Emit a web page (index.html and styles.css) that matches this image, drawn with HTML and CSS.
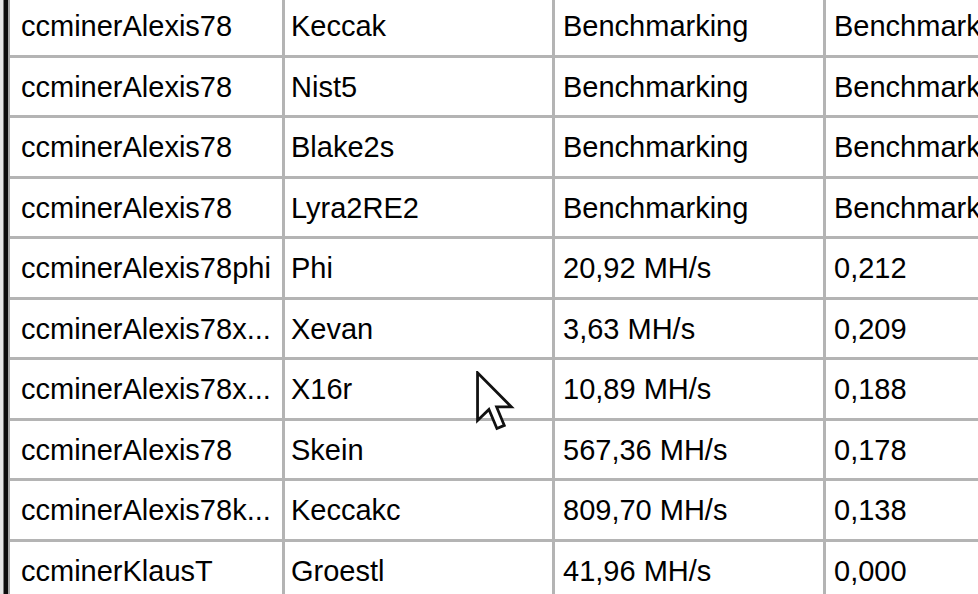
FILE: index.html
```html
<!DOCTYPE html>
<html>
<head>
<meta charset="utf-8">
<link rel="stylesheet" href="styles.css">
</head>
<body>
<div class="frame">
  <div class="frame-dark">
    <div class="frame-inner">
      <div class="list">
        <div class="row"><div class="cell c1">ccminerAlexis78</div><div class="cell c2">Keccak</div><div class="cell c3">Benchmarking</div><div class="cell c4">Benchmarking</div></div>
        <div class="row"><div class="cell c1">ccminerAlexis78</div><div class="cell c2">Nist5</div><div class="cell c3">Benchmarking</div><div class="cell c4">Benchmarking</div></div>
        <div class="row"><div class="cell c1">ccminerAlexis78</div><div class="cell c2">Blake2s</div><div class="cell c3">Benchmarking</div><div class="cell c4">Benchmarking</div></div>
        <div class="row"><div class="cell c1">ccminerAlexis78</div><div class="cell c2">Lyra2RE2</div><div class="cell c3">Benchmarking</div><div class="cell c4">Benchmarking</div></div>
        <div class="row"><div class="cell c1">ccminerAlexis78phi</div><div class="cell c2">Phi</div><div class="cell c3">20,92 MH/s</div><div class="cell c4">0,212</div></div>
        <div class="row"><div class="cell c1">ccminerAlexis78x...</div><div class="cell c2">Xevan</div><div class="cell c3">3,63 MH/s</div><div class="cell c4">0,209</div></div>
        <div class="row"><div class="cell c1">ccminerAlexis78x...</div><div class="cell c2">X16r</div><div class="cell c3">10,89 MH/s</div><div class="cell c4">0,188</div></div>
        <div class="row"><div class="cell c1">ccminerAlexis78</div><div class="cell c2">Skein</div><div class="cell c3">567,36 MH/s</div><div class="cell c4">0,178</div></div>
        <div class="row"><div class="cell c1">ccminerAlexis78k...</div><div class="cell c2">Keccakc</div><div class="cell c3">809,70 MH/s</div><div class="cell c4">0,138</div></div>
        <div class="row"><div class="cell c1">ccminerKlausT</div><div class="cell c2">Groestl</div><div class="cell c3">41,96 MH/s</div><div class="cell c4">0,000</div></div>
      </div>
    </div>
  </div>
</div>
<svg class="cursor" width="40" height="62" viewBox="0 0 13 20">
  <path d="M0.5 0.5 L0.5 16 L4.2 12.4 L6.8 18.6 L9.2 17.6 L6.7 11.6 L11.5 11.6 Z" fill="#fff" stroke="#111" stroke-width="0.9" stroke-linejoin="miter"/>
</svg>
</body>
</html>
```

FILE: styles.css
```css
html, body {
  margin: 0;
  padding: 0;
  background: #e6e6e6;
  overflow: hidden;
}
body {
  width: 978px;
  height: 594px;
  position: relative;
  padding-left: 3px;
  box-sizing: border-box;
}
.frame {
  border-left: 1px solid #7a7a7a;
  height: 100%;
}
.frame-dark {
  border-left: 4px solid #0c0c0c;
  height: 100%;
}
.frame-inner {
  border-left: 2px solid #a6a6a6;
  height: 100%;
  background: #fff;
  overflow: hidden;
}
.list {
  margin-top: -3px;
  font-family: "Liberation Sans", Arial, sans-serif;
  font-size: 29px;
  line-height: 33px;
  color: #000;
}
.row {
  display: grid;
  grid-template-columns: 275px 270px 271px 1fr;
  height: 60.5px;
  box-sizing: border-box;
  border-bottom: 3px solid #b4b4b4;
}
.cell {
  padding-top: 13px;
  white-space: nowrap;
  overflow: hidden;
  box-sizing: border-box;
}
.c1, .c2, .c3 {
  border-right: 3px solid #b4b4b4;
}
.c1 { padding-left: 11px; }
.c2 { padding-left: 6px; }
.c3 { padding-left: 8px; }
.c4 { padding-left: 8px; }
.cursor {
  position: absolute;
  left: 476px;
  top: 371px;
}
```
